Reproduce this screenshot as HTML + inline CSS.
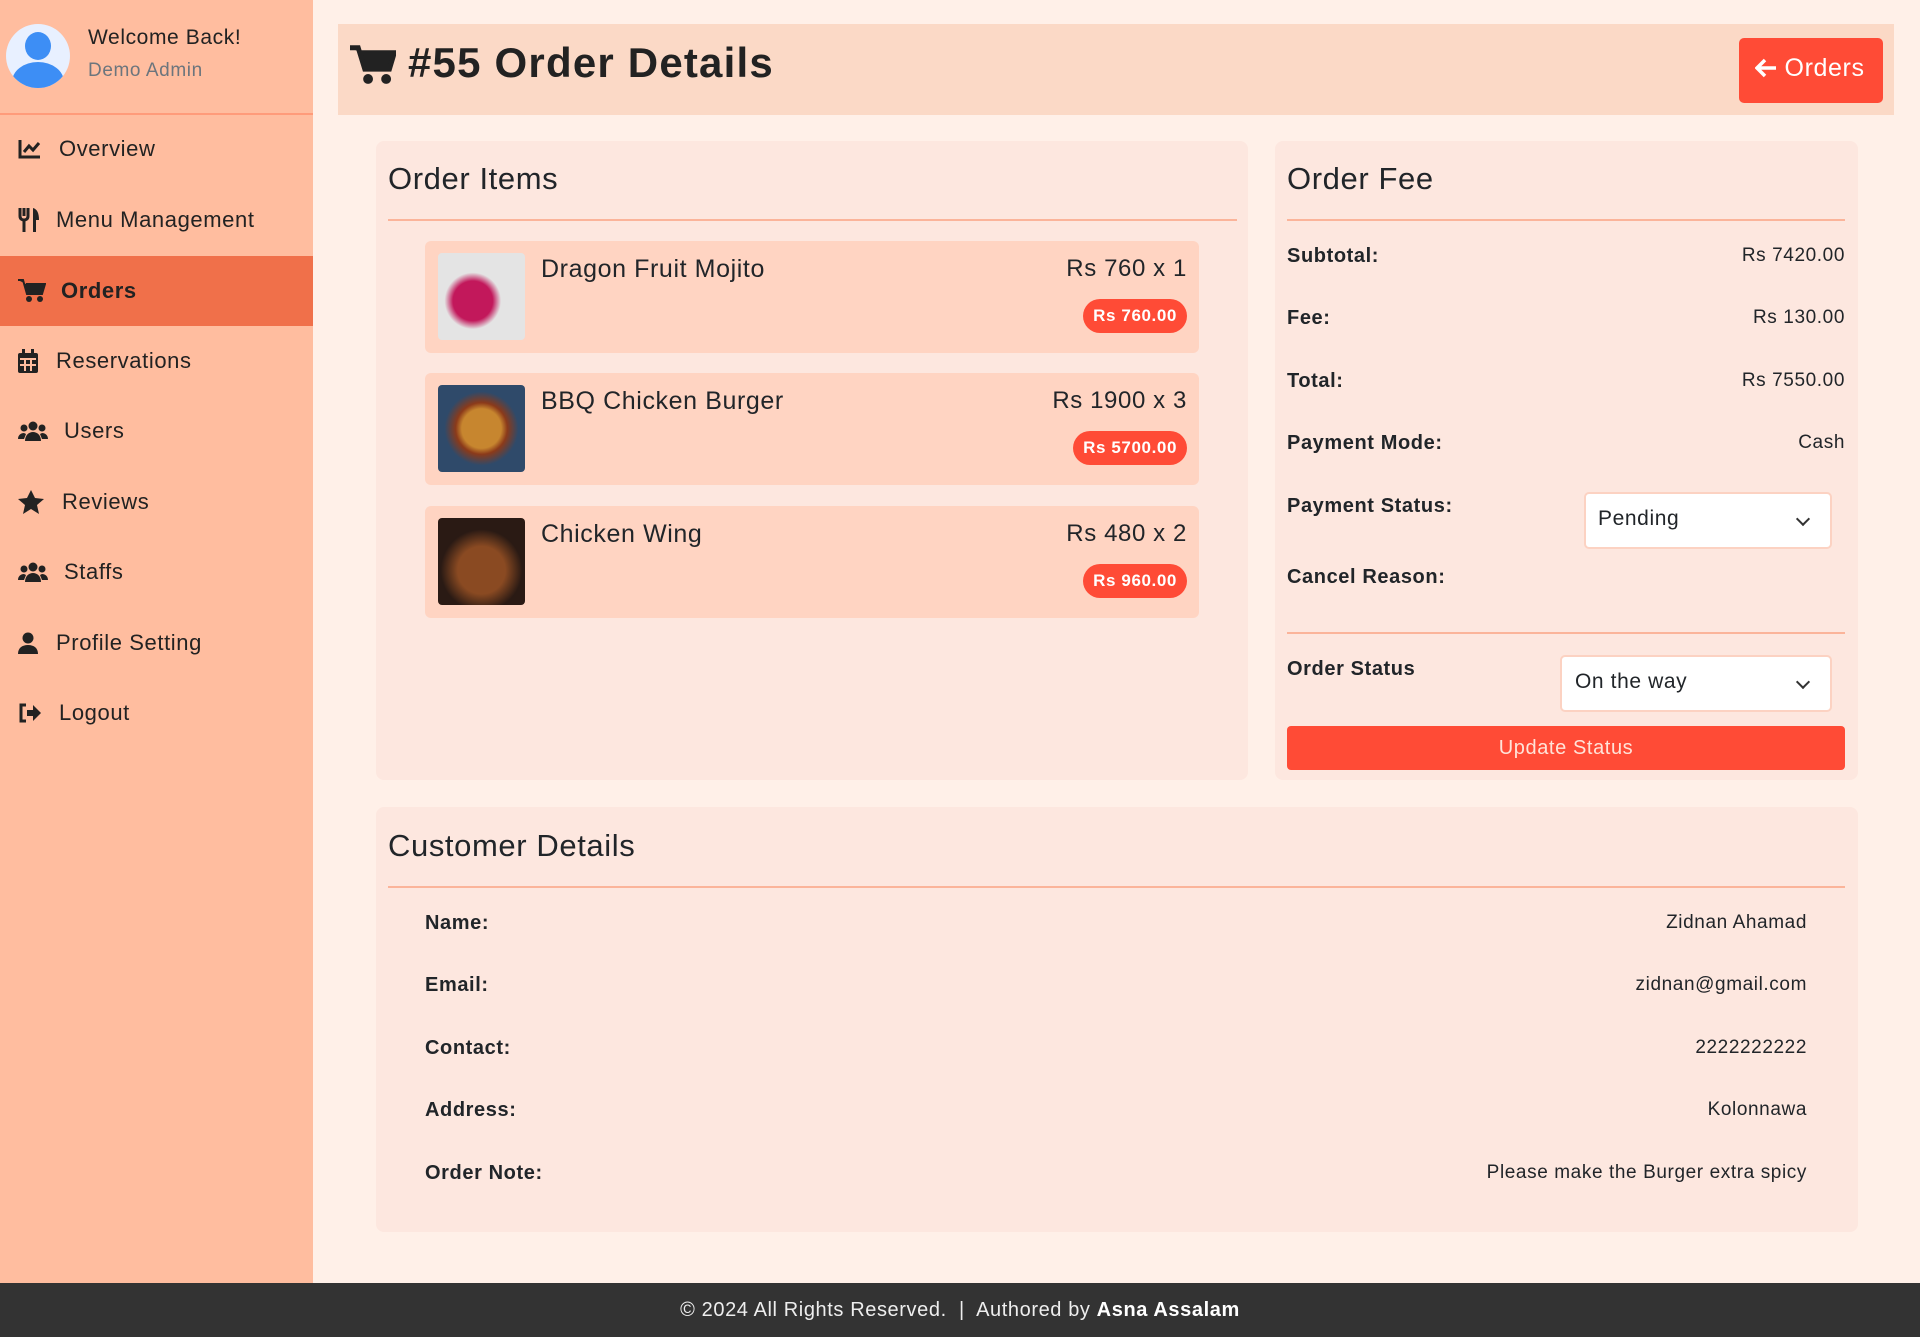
<!DOCTYPE html>
<html><head><meta charset="utf-8"><style>
*{box-sizing:border-box;margin:0;padding:0}
body{width:1920px;height:1337px;position:relative;background:#fff0e8;font-family:"Liberation Sans",sans-serif;color:#212529;overflow:hidden;letter-spacing:0.6px}
.a{position:absolute}
.side{left:0;top:0;width:313px;height:1283px;background:#ffbd9f}
.nav{position:absolute;left:0;width:313px;height:70px;display:flex;align-items:center;font-size:22px;color:#222}
.nav svg{position:absolute;left:18px}
.nav span{position:absolute;left:56px}
.card{background:#fde7df;border-radius:8px}
.lbl{font-weight:bold;font-size:20px;position:absolute}
.val{font-size:19px;position:absolute;text-align:right}
.item{position:absolute;left:425px;width:774px;height:112px;background:#ffd4c2;border-radius:6px}
.item .img{position:absolute;left:13px;top:12px;width:87px;height:87px;border-radius:4px}
.item .nm{position:absolute;left:116px;top:14px;font-size:25px}
.item .pr{position:absolute;right:12px;top:14px;font-size:24px}
.item .bd{position:absolute;right:12px;top:58px;background:#ff4b36;color:#fff;font-weight:bold;font-size:17px;padding:7px 10px;border-radius:18px}
.sel{position:absolute;background:#fff;border:2px solid #fcd2c2;border-radius:5px;font-size:21px;padding:13px 0 0 12px}
.sel:after{content:"";position:absolute;right:22px;top:20px;width:8px;height:8px;border-right:2px solid #333;border-bottom:2px solid #333;transform:rotate(45deg)}
</style></head><body>
<div class="a side"></div>
<div class="a" style="left:6px;top:24px;width:64px;height:64px;border-radius:50%;background:#e8f0ff;overflow:hidden">
<div class="a" style="left:19px;top:8px;width:26px;height:28px;border-radius:50%;background:#3d8ef5"></div>
<div class="a" style="left:6px;top:38px;width:52px;height:40px;border-radius:50% 50% 0 0;background:#3d8ef5"></div></div>
<div class="a" style="left:88px;top:26px;font-size:21px;color:#222">Welcome Back!</div>
<div class="a" style="left:88px;top:60px;font-size:19px;color:#6c757d">Demo Admin</div>
<div class="a" style="left:0;top:113px;width:313px;height:2px;background:#ff9b7a"></div>
<div class="nav" style="top:114px"><svg width="24" height="22" viewBox="0 0 24 22"><path d="M2 2v17h20" stroke="#222" stroke-width="3" fill="none"/><path d="M6 14l5-6 4 4 6-7" stroke="#222" stroke-width="3" fill="none"/></svg><span style="left:59px">Overview</span></div>
<div class="nav" style="top:185px"><svg width="22" height="26" viewBox="0 0 22 26"><path d="M2 1v8c0 3 2 4 4 4v12M6 1v8M10 1v8c0 3-2 4-4 4" stroke="#222" stroke-width="3" fill="none"/><path d="M15 25V1c4 1 6 5 6 12h-3v12z" fill="#222"/></svg><span>Menu Management</span></div>
<div class="nav" style="top:256px;background:#f0704a;font-weight:bold"><svg width="28" height="24" viewBox="0 0 28 24"><path d="M0 1h5l4 14h15l3-10H8" fill="#222" stroke="#222" stroke-width="2"/><circle cx="11" cy="20" r="3" fill="#222"/><circle cx="22" cy="20" r="3" fill="#222"/></svg><span style="left:61px">Orders</span></div>
<div class="nav" style="top:326px"><svg width="20" height="24" viewBox="0 0 20 24"><rect x="0" y="4" width="20" height="20" rx="2" fill="#222"/><rect x="4" y="0" width="3" height="6" fill="#222"/><rect x="13" y="0" width="3" height="6" fill="#222"/><path d="M2 10h16M7 10v12M13 10v12M2 16h16" stroke="#ffbd9f" stroke-width="2"/></svg><span>Reservations</span></div>
<div class="nav" style="top:396px"><svg width="30" height="20" viewBox="0 0 30 20"><circle cx="15" cy="5" r="4.5" fill="#222"/><circle cx="6" cy="7" r="3.5" fill="#222"/><circle cx="24" cy="7" r="3.5" fill="#222"/><path d="M7 20c0-6 4-9 8-9s8 3 8 9zM0 18c0-4 3-6 6-6l2 1-2 5zM30 18c0-4-3-6-6-6l-2 1 2 5z" fill="#222"/></svg><span style="left:64px">Users</span></div>
<div class="nav" style="top:467px"><svg width="26" height="24" viewBox="0 0 26 24"><path d="M13 0l4 8 9 1-7 6 2 9-8-5-8 5 2-9-7-6 9-1z" fill="#222"/></svg><span style="left:62px">Reviews</span></div>
<div class="nav" style="top:537px"><svg width="30" height="20" viewBox="0 0 30 20"><circle cx="15" cy="5" r="4.5" fill="#222"/><circle cx="6" cy="7" r="3.5" fill="#222"/><circle cx="24" cy="7" r="3.5" fill="#222"/><path d="M7 20c0-6 4-9 8-9s8 3 8 9zM0 18c0-4 3-6 6-6l2 1-2 5zM30 18c0-4-3-6-6-6l-2 1 2 5z" fill="#222"/></svg><span style="left:64px">Staffs</span></div>
<div class="nav" style="top:608px"><svg width="20" height="22" viewBox="0 0 20 22"><circle cx="10" cy="6" r="5.5" fill="#222"/><path d="M0 22c0-6 4-9 10-9s10 3 10 9z" fill="#222"/></svg><span>Profile Setting</span></div>
<div class="nav" style="top:678px"><svg width="24" height="20" viewBox="0 0 24 20"><path d="M8 2H3v16h5" stroke="#222" stroke-width="3" fill="none"/><path d="M9 7h6V2l8 8-8 8v-5H9z" fill="#222"/></svg><span style="left:59px">Logout</span></div>

<div class="a" style="left:338px;top:24px;width:1556px;height:91px;background:#fbd9c6"></div>
<svg class="a" style="left:350px;top:44px" width="46" height="42" viewBox="0 0 28 24"><path d="M0 1.5h5l4 13h15l3-10H7" fill="#222" stroke="#222" stroke-width="3"/><circle cx="11" cy="20.5" r="3" fill="#222"/><circle cx="22" cy="20.5" r="3" fill="#222"/></svg>
<div class="a" style="left:408px;top:39px;font-size:42px;font-weight:bold;letter-spacing:1.2px;color:#222">#55 Order Details</div>
<div class="a" style="left:1739px;top:38px;width:144px;height:65px;background:#ff4b36;border-radius:5px;color:#fff;font-size:25px;padding:16px 0 0 16px"><svg width="22" height="20" viewBox="0 0 22 20" style="vertical-align:-2px"><path d="M10 2L2 10l8 8M2 10h19" stroke="#fff" stroke-width="3.5" fill="none"/></svg> Orders</div>

<div class="a card" style="left:376px;top:141px;width:872px;height:639px"></div>
<div class="a" style="left:388px;top:161px;font-size:31px">Order Items</div>
<div class="a" style="left:388px;top:219px;width:849px;height:2px;background:#fbb49a"></div>
<div class="item" style="top:241px"><div class="img" style="background:radial-gradient(circle at 40% 55%,#c2185b 0 28%,#e4e4e4 40%)"></div><div class="nm">Dragon Fruit Mojito</div><div class="pr">Rs 760 x 1</div><div class="bd">Rs 760.00</div></div>
<div class="item" style="top:373px"><div class="img" style="background:radial-gradient(circle at 50% 50%,#c7862f 0 32%,#8b3a1a 42%,#2f4a6a 60%)"></div><div class="nm">BBQ Chicken Burger</div><div class="pr">Rs 1900 x 3</div><div class="bd">Rs 5700.00</div></div>
<div class="item" style="top:506px"><div class="img" style="background:radial-gradient(circle at 50% 60%,#8a4a22 0 35%,#2a1a14 60%)"></div><div class="nm">Chicken Wing</div><div class="pr">Rs 480 x 2</div><div class="bd">Rs 960.00</div></div>

<div class="a card" style="left:1275px;top:141px;width:583px;height:639px"></div>
<div class="a" style="left:1287px;top:161px;font-size:31px">Order Fee</div>
<div class="a" style="left:1287px;top:219px;width:558px;height:2px;background:#fbb49a"></div>
<div class="lbl" style="left:1287px;top:245px">Subtotal:</div><div class="val" style="right:75px;top:245px">Rs 7420.00</div>
<div class="lbl" style="left:1287px;top:307px">Fee:</div><div class="val" style="right:75px;top:307px">Rs 130.00</div>
<div class="lbl" style="left:1287px;top:370px">Total:</div><div class="val" style="right:75px;top:370px">Rs 7550.00</div>
<div class="lbl" style="left:1287px;top:432px">Payment Mode:</div><div class="val" style="right:75px;top:432px">Cash</div>
<div class="lbl" style="left:1287px;top:495px">Payment Status:</div>
<div class="sel" style="left:1584px;top:492px;width:248px;height:57px">Pending</div>
<div class="lbl" style="left:1287px;top:566px">Cancel Reason:</div>
<div class="a" style="left:1287px;top:632px;width:558px;height:2px;background:#fbb49a"></div>
<div class="lbl" style="left:1287px;top:658px">Order Status</div>
<div class="sel" style="left:1560px;top:655px;width:272px;height:57px;padding-left:13px">On the way</div>
<div class="a" style="left:1287px;top:726px;width:558px;height:44px;background:#ff4b36;border-radius:4px;color:#ffe3d8;font-size:20px;text-align:center;line-height:44px">Update Status</div>

<div class="a card" style="left:376px;top:807px;width:1482px;height:425px"></div>
<div class="a" style="left:388px;top:828px;font-size:31px">Customer Details</div>
<div class="a" style="left:388px;top:886px;width:1457px;height:2px;background:#fbb49a"></div>
<div class="lbl" style="left:425px;top:912px">Name:</div><div class="val" style="right:113px;top:912px">Zidnan Ahamad</div>
<div class="lbl" style="left:425px;top:974px">Email:</div><div class="val" style="right:113px;top:974px">zidnan@gmail.com</div>
<div class="lbl" style="left:425px;top:1037px">Contact:</div><div class="val" style="right:113px;top:1037px">2222222222</div>
<div class="lbl" style="left:425px;top:1099px">Address:</div><div class="val" style="right:113px;top:1099px">Kolonnawa</div>
<div class="lbl" style="left:425px;top:1162px">Order Note:</div><div class="val" style="right:113px;top:1162px">Please make the Burger extra spicy</div>

<div class="a" style="left:0;top:1283px;width:1920px;height:54px;background:#333;color:#eee;font-size:20px;text-align:center;line-height:54px">© 2024 All Rights Reserved. &nbsp;|&nbsp; Authored by <b style="color:#fff">Asna Assalam</b></div>
</body></html>
